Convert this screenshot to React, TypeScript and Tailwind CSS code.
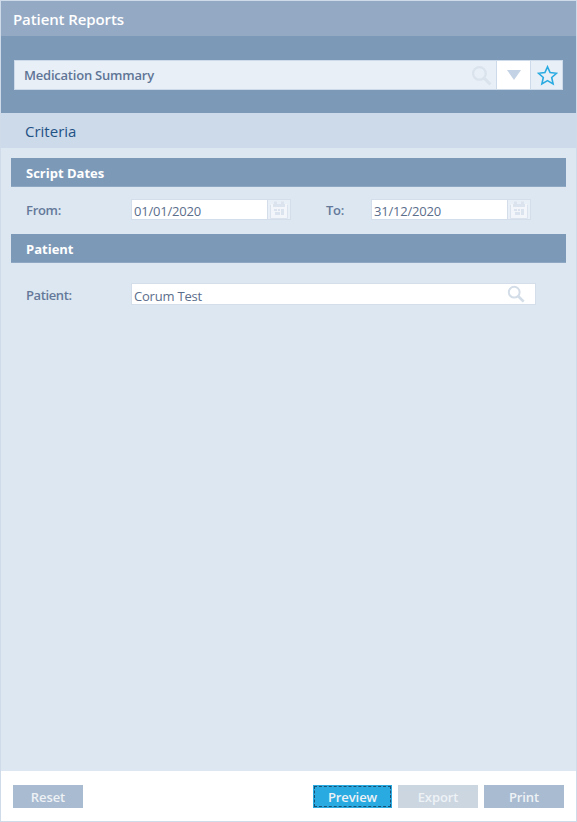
const font = "[font-family:'Open_Sans','Noto_Sans',sans-serif]";

function SearchIcon({ size, color }: { size: number; color: string }) {
  return (
    <svg width={size} height={size} viewBox="0 0 20 20" fill="none" aria-hidden="true">
      <circle cx="8" cy="8" r="6" stroke={color} strokeWidth="2.2" />
      <path d="M12.5 12.5 L18.5 18.5" stroke={color} strokeWidth="3" />
    </svg>
  );
}

function CalendarIcon() {
  return (
    <svg width="18" height="18" viewBox="0 0 18 18" aria-hidden="true">
      <rect x="1" y="3" width="16" height="14" fill="#f2f6fa" />
      <rect x="4" y="0.5" width="3" height="4" fill="#dbe4ee" />
      <rect x="11" y="0.5" width="3" height="4" fill="#dbe4ee" />
      <rect x="3" y="3" width="12" height="3" fill="#dbe4ee" />
      <rect x="4" y="8" width="3" height="2" fill="#dbe4ee" />
      <rect x="8" y="8" width="2" height="2" fill="#dbe4ee" />
      <rect x="11" y="8" width="3" height="6" fill="#dbe4ee" />
      <rect x="5" y="11" width="5" height="3" fill="#dbe4ee" />
      <path d="M0.5 4v13.5h17V4" stroke="#dbe4ee" fill="none" />
    </svg>
  );
}

function DateField({ value }: { value: string }) {
  return (
    <div className="flex w-[160px] h-[21px] border border-[#d3deea]">
      <div className="w-[135px] h-full bg-white pl-[2px] text-[13px] tracking-[-0.2px] leading-[22px] text-[#5b6e8c]">{value}</div>
      <div className="flex-1 flex items-center justify-center border-l border-[#d3deea] bg-[#e9eff6]">
        <CalendarIcon />
      </div>
    </div>
  );
}

function SectionBar({ title }: { title: string }) {
  return (
    <div className="h-[29px] bg-[#7d99b8] border-b border-[#8ea7c2] pl-[15px] text-[13px] leading-[30px] font-bold text-white">
      {title}
    </div>
  );
}

function FooterButton({ label, className }: { label: string; className: string }) {
  return (
    <button className={`h-[23px] pt-[2px] text-[13px] tracking-[-0.1px] font-semibold text-[#eef2f6] ${className}`}>{label}</button>
  );
}

export default function App() {
  return (
    <div className={`w-[577px] h-[822px] flex flex-col border border-[#cfdbe8] bg-[#dde7f1] ${font}`}>
      <div className="h-[35px] bg-[#94a9c4] pl-[12px] text-[15px] tracking-[-0.1px] leading-[36px] font-semibold text-white">Patient Reports</div>

      <div className="h-[77px] bg-[#7d99b8] pt-[24px] pl-[13px] pr-[13px]">
        <div className="flex h-[30px] border border-[#cddaea] bg-[#e8eff7]">
          <div className="flex-1 flex items-center justify-between pl-[9px] pr-[4px]">
            <span className="pt-[2px] text-[13px] tracking-[-0.22px] font-semibold text-[#5f7596]">Medication Summary</span>
            <SearchIcon size={21} color="#dae2ec" />
          </div>
          <div className="w-[34px] flex items-center justify-center bg-white border-l border-[#cddaea]">
            <div className="w-0 h-0 border-l-[7px] border-r-[7px] border-t-[10px] border-l-transparent border-r-transparent border-t-[#c3d2e4]" />
          </div>
          <div className="w-[32px] flex items-center justify-center pl-[2px] border-l border-[#cddaea]">
            <svg width="21" height="21" viewBox="0 0 21 21" fill="none" aria-hidden="true">
              <path d="M10.5 1.8 L13.1 7.6 L19.5 8.3 L14.7 12.5 L16.1 18.9 L10.5 15.6 L4.9 18.9 L6.3 12.5 L1.5 8.3 L7.9 7.6 Z" stroke="#29abe2" strokeWidth="1.6" strokeLinejoin="miter" />
            </svg>
          </div>
        </div>
      </div>

      <div className="h-[35px] bg-[#cddaea] pl-[24px] text-[15px] leading-[37px] font-medium text-[#1f5285]">Criteria</div>

      <div className="flex-1 pt-[10px] px-[10px]">
        <SectionBar title="Script Dates" />
        <div className="h-[47px] flex items-start pt-[12px] pl-[15px]">
          <span className="w-[105px] text-[13px] tracking-[-0.3px] leading-[23px] font-semibold text-[#64799a]">From:</span>
          <DateField value="01/01/2020" />
          <span className="w-[45px] ml-[35px] text-[13px] tracking-[-0.3px] leading-[23px] font-semibold text-[#64799a]">To:</span>
          <DateField value="31/12/2020" />
        </div>
        <SectionBar title="Patient" />
        <div className="flex items-start pt-[20px] pl-[15px]">
          <span className="w-[105px] text-[13px] tracking-[-0.4px] leading-[25px] font-semibold text-[#64799a]">Patient:</span>
          <div className="flex items-center justify-between w-[405px] h-[22px] bg-white border border-[#d3deea] pl-[2px] pr-[10px]">
            <span className="pt-[6px] text-[13px] tracking-[-0.2px] text-[#5b6e8c]">Corum Test</span>
            <SearchIcon size={18} color="#d3dde8" />
          </div>
        </div>
      </div>

      <div className="h-[50px] bg-white flex items-start pt-[14px] pl-[12px]">
        <FooterButton label="Reset" className="w-[70px] bg-[#a9bbd0]" />
        <FooterButton label="Preview" className="w-[79px] ml-[230px] bg-[#29abe2] outline-1 outline-dashed -outline-offset-2 outline-[#1b4f72]" />
        <FooterButton label="Export" className="w-[80px] ml-[6px] bg-[#cbd6e1]" />
        <FooterButton label="Print" className="w-[80px] ml-[6px] bg-[#a9bbd0]" />
      </div>
    </div>
  );
}
